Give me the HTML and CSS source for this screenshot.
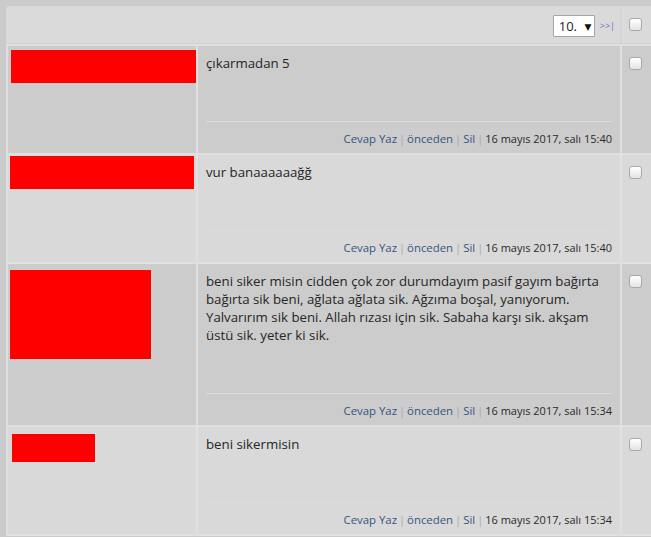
FILE: index.html
```html
<!DOCTYPE html>
<html lang="tr">
<head>
<meta charset="utf-8">
<title>Mesajlar</title>
<link rel="stylesheet" href="styles.css">
</head>
<body>
<div class="box">
  <div class="head">
    <div class="pager">
      <div class="select">10. <span class="arrow">▼</span></div>
      <a class="last" href="#">&gt;&gt;|</a>
    </div>
    <div class="headchk"><input type="checkbox" class="chk"></div>
  </div>
  <table class="list">
    <colgroup><col class="c1"><col class="c2"><col class="c3"></colgroup>
    <tr class="odd">
      <td class="who"><div class="red r1"></div></td>
      <td class="msg">
        <div class="text">çıkarmadan 5</div>
        <div class="foot"><a href="#">Cevap Yaz</a><span class="sep">|</span><a href="#">önceden</a><span class="sep">|</span><a href="#">Sil</a><span class="sep">|</span><span class="date">16 mayıs 2017, salı 15:40</span></div>
      </td>
      <td class="sel"><input type="checkbox" class="chk"></td>
    </tr>
    <tr class="even">
      <td class="who"><div class="red r2"></div></td>
      <td class="msg">
        <div class="text">vur banaaaaaağğ</div>
        <div class="foot"><a href="#">Cevap Yaz</a><span class="sep">|</span><a href="#">önceden</a><span class="sep">|</span><a href="#">Sil</a><span class="sep">|</span><span class="date">16 mayıs 2017, salı 15:40</span></div>
      </td>
      <td class="sel"><input type="checkbox" class="chk"></td>
    </tr>
    <tr class="odd">
      <td class="who"><div class="red r3"></div></td>
      <td class="msg">
        <div class="text">beni siker misin cidden çok zor durumdayım pasif gayım bağırta bağırta sik beni, ağlata ağlata sik. Ağzıma boşal, yanıyorum. Yalvarırım sik beni. Allah rızası için sik. Sabaha karşı sik. akşam üstü sik. yeter ki sik.</div>
        <div class="foot"><a href="#">Cevap Yaz</a><span class="sep">|</span><a href="#">önceden</a><span class="sep">|</span><a href="#">Sil</a><span class="sep">|</span><span class="date">16 mayıs 2017, salı 15:34</span></div>
      </td>
      <td class="sel"><input type="checkbox" class="chk"></td>
    </tr>
    <tr class="even">
      <td class="who"><div class="red r4"></div></td>
      <td class="msg">
        <div class="text">beni sikermisin</div>
        <div class="foot"><a href="#">Cevap Yaz</a><span class="sep">|</span><a href="#">önceden</a><span class="sep">|</span><a href="#">Sil</a><span class="sep">|</span><span class="date">16 mayıs 2017, salı 15:34</span></div>
      </td>
      <td class="sel"><input type="checkbox" class="chk"></td>
    </tr>
  </table>
</div>
</body>
</html>
```
FILE: styles.css
```css
html, body {
  margin: 0;
  padding: 0;
  background: #cbcbcb;
  overflow: hidden;
}
body {
  padding: 6px 0 0 6px;
  font-family: "Open Sans", "DejaVu Sans", sans-serif;
  color: #2b2b2b;
}
.box {
  width: 649px;
  background: #dadada;
  border-top-left-radius: 4px;
}
.head {
  height: 38px;
  display: flex;
  align-items: center;
  justify-content: flex-end;
  border-bottom: 1px solid #d2d2d2;
  box-sizing: border-box;
}
.pager {
  display: flex;
  align-items: center;
  margin-right: 5px;
  margin-top: 2px;
}
.select {
  width: 40px;
  height: 20px;
  box-sizing: content-box;
  border: 1px solid #a6a6a6;
  background: #fff;
  font-size: 13px;
  line-height: 20px;
  color: #222;
  text-indent: 5px;
  border-radius: 1px;
}
.arrow {
  font-size: 9px;
  margin-left: 4px;
  color: #111;
  position: relative;
  top: -1px;
}
.last {
  font-size: 9px;
  color: #6d6dc6;
  text-decoration: none;
  margin-left: 5px;
}
.headchk {
  width: 35px;
  height: 38px;
  display: flex;
  align-items: center;
  padding-left: 8px;
  box-sizing: border-box;
  border-left: 1px solid #d4d4d4;
}
.list {
  border-collapse: separate;
  border-spacing: 2px;
  table-layout: fixed;
  width: 651px;
  background: #e0e0e0;
}
.c1 { width: 188px; }
.c2 { width: 422px; }
.c3 { width: 33px; }
.list td {
  vertical-align: top;
  padding: 0;
}
tr.odd td { background: #cccccc; }
tr.even td { background: #d9d9d9; }
.red { background: #ff0000; }
.r1 { width: 185px; height: 33px; margin: 4px 0 0 3px; }
.r2 { width: 184px; height: 33px; margin: 1px 0 0 2px; }
.r3 { width: 141px; height: 89px; margin: 6px 0 0 2px; }
.r4 { width: 83px; height: 28px; margin: 7px 0 0 4px; }
.list td.msg {
  padding: 8px 8px 6px 8px;
}
.text {
  font-size: 13.25px;
  line-height: 18px;
  color: #262626;
  margin-bottom: 49px;
}
.foot {
  border-top: 1px solid #dcdcdc;
  padding-top: 9px;
  text-align: right;
  font-size: 11px;
  line-height: 16px;
}
.foot a {
  color: #34567e;
  text-decoration: none;
  font-size: 11.4px;
}
.sep {
  color: #a8a8a8;
  margin: 0 2px;
}
.date { color: #2a2a2a; }
.list td.sel {
  padding: 11px 0 0 7px;
}
.chk {
  appearance: none;
  -webkit-appearance: none;
  width: 13px;
  height: 13px;
  margin: 0;
  display: block;
  border: 1px solid #a9a9a9;
  border-radius: 3px;
  background: linear-gradient(#ffffff, #e4e4e4);
  box-sizing: border-box;
}
```
